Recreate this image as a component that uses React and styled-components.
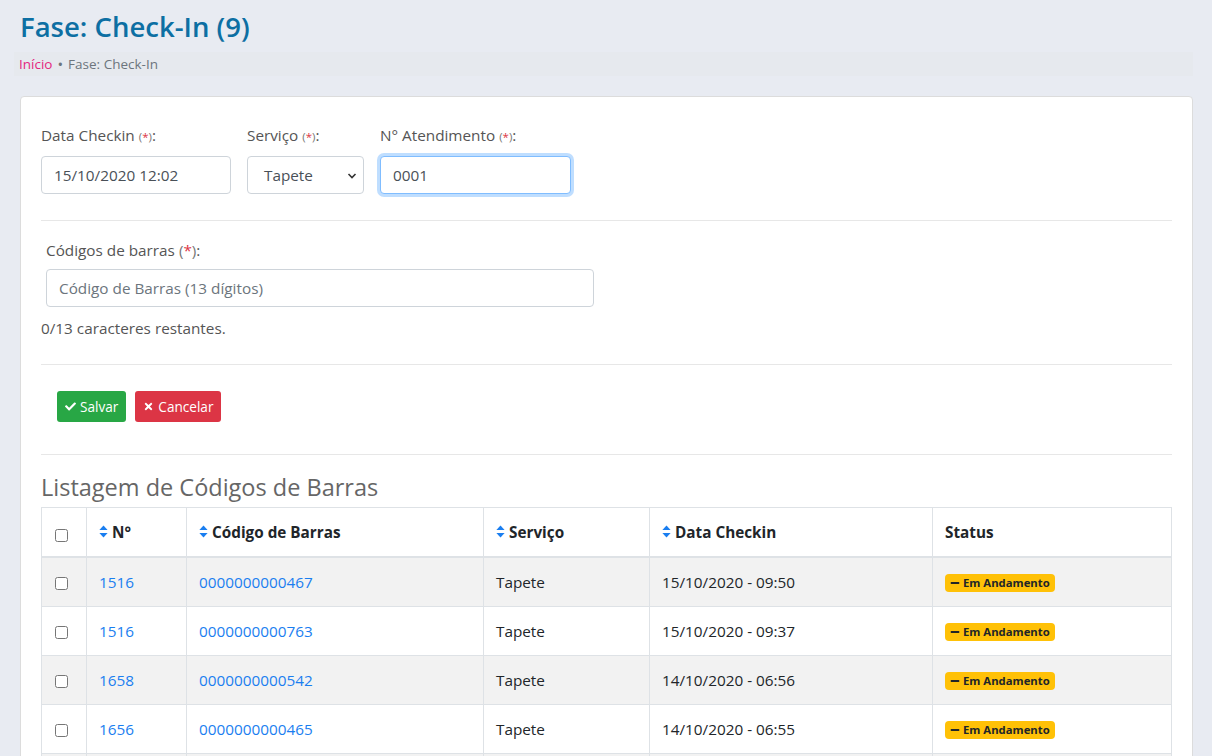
import React from "react";
import styled, { createGlobalStyle } from "styled-components";
import { FaCheck, FaTimes, FaMinus } from "react-icons/fa";

const Global = createGlobalStyle`
  html, body { margin: 0; padding: 0; background: #e8ebf2; }
  body { font-family: "Open Sans", "Noto Sans", sans-serif; color: #212529; }
  * { box-sizing: border-box; }
`;

const Page = styled.div`
  padding: 0 19px 40px 14px;
`;

const Title = styled.h1`
  margin: 0;
  padding: 9px 0 0 6px;
  height: 52px;
  font-size: 27.5px;
  font-weight: 600;
  color: #0d6fa3;
  line-height: 36px;
`;

const Breadcrumb = styled.nav`
  height: 24px;
  background: #e6e9ee;
  display: flex;
  align-items: center;
  gap: 5px;
  padding-left: 5px;
  font-size: 13.5px;
  color: #6c757d;
`;

const Crumb = styled.a`
  color: ${(p) => (p.$active ? "#6c757d" : "#e4267f")};
  text-decoration: none;
`;

const Dot = styled.span`
  font-size: 15px;
  color: #6c757d;
`;

const Card = styled.section`
  margin: 20px 0 0 6px;
  background: #fff;
  border: 1px solid #dcdcdc;
  border-radius: 4px;
  padding: 26px 20px 0 20px;
`;

const Row = styled.div`
  display: flex;
  gap: 16px;
  padding-left: ${(p) => p.$indent || 0}px;
`;

const Group = styled.div`
  display: flex;
  flex-direction: column;
  gap: 7px;
  width: ${(p) => p.$w}px;
`;

const Label = styled.label`
  font-size: 15.3px;
  line-height: 24px;
  color: #555;
`;

const Req = styled.span`
  font-size: ${(p) => (p.$big ? "15.3px" : "11.5px")};
  color: #777;
  & b { color: #dc3545; font-weight: 400; }
`;

const Input = styled.input`
  height: 38px;
  width: 100%;
  border: 1px solid ${(p) => (p.$focus ? "#80bdff" : "#ced4da")};
  box-shadow: ${(p) => (p.$focus ? "0 0 0 3px rgba(0,123,255,0.25)" : "none")};
  border-radius: 4px;
  padding: 0 12px;
  font-family: inherit;
  font-size: 15.3px;
  color: #495057;
  outline: none;
  background: #fff;
  &::placeholder { color: #6c757d; }
`;

const SelectWrap = styled.div`
  position: relative;
  height: 38px;
  border: 1px solid #ced4da;
  border-radius: 4px;
  display: flex;
  align-items: center;
  padding-left: 16px;
  font-size: 15.3px;
  color: #495057;
  & svg { position: absolute; right: 6px; top: 15px; }
`;

const Rule = styled.hr`
  border: 0;
  border-top: 1px solid #e7e7e7;
  margin: ${(p) => p.$m || "26px 0"};
`;

const Help = styled.div`
  font-size: 15.3px;
  color: #555;
  line-height: 24px;
  margin-top: 9px;
`;

const Buttons = styled.div`
  display: flex;
  gap: 9px;
  padding-left: 16px;
`;

const Button = styled.button`
  height: 31px;
  display: inline-flex;
  align-items: center;
  gap: 4px;
  padding: 0 8px;
  border: 0;
  border-radius: 3px;
  font-family: inherit;
  font-size: 13.6px;
  color: #fff;
  background: ${(p) => (p.$variant === "danger" ? "#dc3545" : "#28a745")};
  & svg { font-size: 11px; }
`;

const SectionTitle = styled.h2`
  margin: 18px 0 5px 0;
  font-size: 23.5px;
  font-weight: 500;
  line-height: 29px;
  color: #666;
`;

const Table = styled.table`
  width: 100%;
  border-collapse: collapse;
  font-size: 15.3px;
  table-layout: fixed;
`;

const Th = styled.th`
  text-align: left;
  font-weight: 700;
  padding: 12px;
  height: 49px;
  border: 1px solid #dee2e6;
  border-bottom-width: 2px;
  vertical-align: ${(p) => (p.$bottom ? "bottom" : "middle")};
  width: ${(p) => p.$w}px;
  color: #212529;
`;

const Tr = styled.tr`
  background: ${(p) => (p.$odd ? "#f2f2f2" : "#fff")};
`;

const Td = styled.td`
  padding: 12px;
  height: 49px;
  border: 1px solid #dee2e6;
  color: #212529;
  line-height: 24px;
`;

const Link = styled.a`
  color: #1a7ef0;
  text-decoration: none;
`;

const HeadLabel = styled.span`
  display: inline-flex;
  align-items: center;
  gap: 4px;
`;

const Check = styled.input.attrs({ type: "checkbox" })`
  margin: 0 0 0 1px;
  width: 13px;
  height: 13px;
  vertical-align: middle;
`;

const Badge = styled.span`
  display: inline-flex;
  align-items: center;
  gap: 3px;
  background: #ffc107;
  color: #212529;
  font-size: 11.3px;
  font-weight: 700;
  border-radius: 4px;
  padding: 2px 5px;
  line-height: 14px;
  & svg { font-size: 10px; }
`;

const SortIcon = () => (
  <svg width="9" height="13" viewBox="0 0 9 13">
    <path d="M4.5 0.5 L8.6 5 L0.4 5 Z" fill="#1a7ef0" />
    <path d="M4.5 12.5 L8.6 8 L0.4 8 Z" fill="#1a7ef0" />
  </svg>
);

const Chevron = () => (
  <svg width="10" height="8" viewBox="0 0 10 8">
    <path d="M1.5 2 L5 5.5 L8.5 2" stroke="#333" strokeWidth="1.6" fill="none" />
  </svg>
);

const rows = [
  ["1516", "0000000000467", "Tapete", "15/10/2020 - 09:50"],
  ["1516", "0000000000763", "Tapete", "15/10/2020 - 09:37"],
  ["1658", "0000000000542", "Tapete", "14/10/2020 - 06:56"],
  ["1656", "0000000000465", "Tapete", "14/10/2020 - 06:55"],
  ["1655", "0000000000464", "Tapete", "14/10/2020 - 06:54"],
];

export default function App() {
  return (
    <>
      <Global />
      <Page>
        <Title>Fase: Check-In (9)</Title>
        <Breadcrumb>
          <Crumb href="#">Início</Crumb>
          <Dot>•</Dot>
          <Crumb $active>Fase: Check-In</Crumb>
        </Breadcrumb>
        <Card>
          <Row>
            <Group $w={190}>
              <Label>
                Data Checkin <Req>(<b>*</b>)</Req>:
              </Label>
              <Input defaultValue="15/10/2020 12:02" />
            </Group>
            <Group $w={117}>
              <Label>
                Serviço <Req>(<b>*</b>)</Req>:
              </Label>
              <SelectWrap>
                Tapete
                <Chevron />
              </SelectWrap>
            </Group>
            <Group $w={191}>
              <Label>
                N° Atendimento <Req>(<b>*</b>)</Req>:
              </Label>
              <Input $focus defaultValue="0001" />
            </Group>
          </Row>
          <Rule $m="26px 0 17px 0" />
          <Row $indent={5}>
            <Group $w={548}>
              <Label>
                Códigos de barras <Req $big>(<b>*</b>)</Req>:
              </Label>
              <Input placeholder="Código de Barras (13 dígitos)" />
            </Group>
          </Row>
          <Help>0/13 caracteres restantes.</Help>
          <Rule $m="24px 0 26px 0" />
          <Buttons>
            <Button>
              <FaCheck /> Salvar
            </Button>
            <Button $variant="danger">
              <FaTimes /> Cancelar
            </Button>
          </Buttons>
          <Rule $m="32px 0 0 0" />
          <SectionTitle>Listagem de Códigos de Barras</SectionTitle>
          <Table>
            <thead>
              <tr>
                <Th $w={45} $bottom>
                  <Check />
                </Th>
                <Th $w={100}>
                  <HeadLabel>
                    <SortIcon />N°
                  </HeadLabel>
                </Th>
                <Th $w={297}>
                  <HeadLabel>
                    <SortIcon />Código de Barras
                  </HeadLabel>
                </Th>
                <Th $w={166}>
                  <HeadLabel>
                    <SortIcon />Serviço
                  </HeadLabel>
                </Th>
                <Th $w={283}>
                  <HeadLabel>
                    <SortIcon />Data Checkin
                  </HeadLabel>
                </Th>
                <Th>Status</Th>
              </tr>
            </thead>
            <tbody>
              {rows.map((r, i) => (
                <Tr key={i} $odd={i % 2 === 0}>
                  <Td>
                    <Check />
                  </Td>
                  <Td>
                    <Link href="#">{r[0]}</Link>
                  </Td>
                  <Td>
                    <Link href="#">{r[1]}</Link>
                  </Td>
                  <Td>{r[2]}</Td>
                  <Td>{r[3]}</Td>
                  <Td>
                    <Badge>
                      <FaMinus /> Em Andamento
                    </Badge>
                  </Td>
                </Tr>
              ))}
            </tbody>
          </Table>
        </Card>
      </Page>
    </>
  );
}
